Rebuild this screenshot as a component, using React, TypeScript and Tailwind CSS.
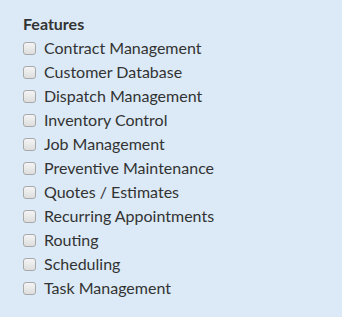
const features = [
  "Contract Management",
  "Customer Database",
  "Dispatch Management",
  "Inventory Control",
  "Job Management",
  "Preventive Maintenance",
  "Quotes / Estimates",
  "Recurring Appointments",
  "Routing",
  "Scheduling",
  "Task Management",
];

const App = () => {
  return (
    <div className="w-[342px] h-[317px] bg-[#dbeaf6] pt-[14px] pl-[23px] font-['Lato',sans-serif] text-[#333]">
      <h4 className="text-[16px] font-bold leading-[20px] mb-[2px]">Features</h4>
      <ul>
        {features.map((f) => (
          <li key={f} className="flex items-center h-[24px]">
            <input
              type="checkbox"
              className="appearance-none w-[13px] h-[13px] m-0 mr-[8px] rounded-[3px] border border-[#a9a9a9] bg-gradient-to-b from-[#f4f4f4] to-[#dedede]"
            />
            <span className="text-[16px] leading-[24px]">{f}</span>
          </li>
        ))}
      </ul>
    </div>
  );
};

export default App;
